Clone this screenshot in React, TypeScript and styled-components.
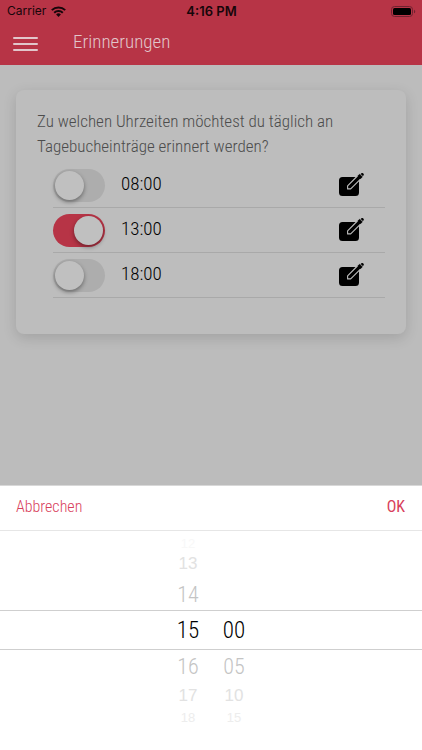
import React, { useState } from "react";
import styled, { createGlobalStyle, css } from "styled-components";

const narrow = `"Roboto Condensed", "Liberation Sans Narrow", "Liberation Sans", Arial, sans-serif`;

const GlobalStyle = createGlobalStyle`
  *, *::before, *::after { box-sizing: border-box; }
  html, body, #root { height: 100%; }
  body { margin: 0; background: #bcbcbc; font-family: ${narrow}; font-weight: 300; }
  button { border: 0; padding: 0; background: none; font: inherit; color: inherit; cursor: pointer; }
`;

const Screen = styled.div`
  min-height: 100%;
  display: flex;
  flex-direction: column;
  background: #bcbcbc;
`;

const Header = styled.header`
  background: #b73446;
  color: #e2c6cb;
`;

const StatusBar = styled.div`
  display: grid;
  grid-template-columns: 1fr auto 1fr;
  align-items: center;
  height: 22px;
  padding: 0 6px 0 7px;
  color: #16060a;
  font: 12px/16px Inter, "Liberation Sans", sans-serif;
`;

const Carrier = styled.span`
  display: flex;
  align-items: center;
  gap: 5px;
`;

const Clock = styled.time`
  font-size: 13px;
  font-weight: 600;
`;

const Battery = styled.svg`
  justify-self: end;
`;

const NavBar = styled.div`
  display: flex;
  align-items: center;
  gap: 35px;
  height: 43px;
  padding: 0 13px 3px;
`;

const MenuButton = styled.button`
  display: flex;
  padding-top: 4px;
`;

const Title = styled.h1`
  margin: 0;
  font-size: 19px;
  line-height: 24px;
  font-weight: 300;
`;

const Main = styled.main`
  flex: 1;
  padding: 25px 16px;
`;

const Card = styled.section`
  padding: 19px 21px 36px;
  border-radius: 8px;
  background: #bdbdbd;
  box-shadow: 0 4px 14px rgba(0, 0, 0, 0.14);
`;

const Question = styled.h2`
  margin: 0;
  font-size: 17px;
  line-height: 25px;
  font-weight: 300;
  color: #4c4c4c;
`;

const List = styled.ul`
  margin: 4px 0 0;
  padding: 0 0 0 16px;
  list-style: none;
`;

const Row = styled.li`
  display: flex;
  align-items: center;
  height: 45px;
  border-bottom: 1px solid #a9a9a9;
  padding-right: 21px;
`;

const Toggle = styled.input`
  appearance: none;
  flex: none;
  display: flex;
  width: 52px;
  height: 33px;
  margin: 0;
  padding: 2px;
  border-radius: 17px;
  background: #adadad;
  cursor: pointer;

  &::before {
    content: "";
    width: 29px;
    height: 29px;
    border-radius: 50%;
    background: #c0c0c0;
    box-shadow: 0 2px 4px rgba(0, 0, 0, 0.4);
  }

  &:checked {
    justify-content: flex-end;
    background: #b73446;
  }
`;

const TimeLabel = styled.label`
  flex: 1;
  padding: 0 0 2px 16px;
  font-size: 19px;
  line-height: 24px;
  color: #000;
`;

const EditButton = styled.button`
  display: flex;
  color: #000;
`;

const Sheet = styled.section`
  border-top: 1px solid #d8d8d8;
  background: #fff;
`;

const SheetBar = styled.div`
  display: flex;
  justify-content: space-between;
  align-items: center;
  height: 45px;
  padding: 0 17px 2px 16px;
  border-bottom: 1px solid #e6e6e6;
`;

const SheetButton = styled.button<{ $strong?: boolean }>`
  font-size: 16px;
  line-height: 24px;
  font-weight: ${(p) => (p.$strong ? 400 : 300)};
  color: #d8405b;
`;

const Wheel = styled.div`
  padding: 5px 0 26px;
`;

const tiers = [
  css`height: 40px; color: #000; font-size: 23px;`,
  css`height: 32px; color: #c4c4c4; font-size: 22px;`,
  css`height: 28px; color: #e2e2e2; font: 17px "Liberation Sans", Arial, sans-serif;`,
  css`height: 14px; color: #ededed; font: 13px "Liberation Sans", Arial, sans-serif;`,
];

const WheelRow = styled.div<{ $distance: number }>`
  display: grid;
  grid-template-columns: 24px 24px;
  justify-content: center;
  align-items: center;
  column-gap: 22px;
  text-align: center;
  ${(p) => tiers[p.$distance]}
  ${(p) => p.$distance === 0 && css`
    border-top: 1px solid #cfcfcf;
    border-bottom: 1px solid #cfcfcf;
  `}
`;

const WheelValue = styled.span<{ $faint?: boolean }>`
  ${(p) => p.$faint && css`color: #f8f8f8;`}
`;

const WifiIcon = () => (
  <svg width="15" height="11" viewBox="0 0 15 11" fill="none" stroke="currentColor" strokeWidth="2" aria-hidden="true">
    <path d="M.8 4.1a9.6 9.6 0 0 1 13.4 0" />
    <path d="M3.2 6.8a6.2 6.2 0 0 1 8.6 0" />
    <path d="M7.5 10.9 5.1 8.5a3.5 3.5 0 0 1 4.8 0Z" fill="currentColor" stroke="none" />
  </svg>
);

const BatteryIcon = () => (
  <Battery width="25" height="11" viewBox="0 0 25 11" aria-label="Akku voll" role="img">
    <rect x=".5" y=".5" width="21" height="10" rx="3" fill="none" stroke="#6f2230" />
    <rect x="2" y="2" width="18" height="7" rx="1.5" fill="#000" />
    <path d="M23 3.7c1.7.4 1.7 3.2 0 3.6Z" fill="#6f2230" />
  </Battery>
);

const MenuIcon = () => (
  <svg width="25" height="16" viewBox="0 0 25 16" stroke="currentColor" strokeWidth="2" strokeLinecap="round" aria-hidden="true">
    <path d="M1 2h23M1 8h23M1 14h23" />
  </svg>
);

const EditIcon = () => (
  <svg width="25" height="24" viewBox="0 0 25 24" aria-hidden="true">
    <path d="M3.5 4h13L20 7v12.500a3.500 3.500 0 0 1-3.500 3.500h-13A3.500 3.500 0 0 1 0 19.500V7.500A3.500 3.500 0 0 1 3.500 4Z" fill="currentColor" />
    <path d="M8.600 15.900V12.800L19.400 2 22.500 5.100 11.700 15.900Z" fill="currentColor" stroke="#bdbdbd" strokeWidth="1.100" strokeLinejoin="round" />
    <path d="m18.500 3 2.300-2.300 3 3-2.300 2.300Z" fill="currentColor" />
    <path d="m21.700.9.400-.4a1.500 1.500 0 0 1 2.200 2.200l-.5.400Z" fill="currentColor" />
    <path d="m20.900 1.100 2.700 2.700" stroke="#bdbdbd" strokeWidth=".5" />
  </svg>
);

const initialReminders = [
  { time: "08:00", active: false },
  { time: "13:00", active: true },
  { time: "18:00", active: false },
];

const wheelRows: [number, string, string][] = [
  [3, "12", ""],
  [2, "13", ""],
  [1, "14", ""],
  [0, "15", "00"],
  [1, "16", "05"],
  [2, "17", "10"],
  [3, "18", "15"],
];

export default function App() {
  const [reminders, setReminders] = useState(initialReminders);
  const toggle = (time: string) =>
    setReminders((all) => all.map((r) => (r.time === time ? { ...r, active: !r.active } : r)));

  return (
    <>
      <GlobalStyle />
      <Screen>
        <Header>
          <StatusBar>
            <Carrier>Carrier <WifiIcon /></Carrier>
            <Clock>4:16 PM</Clock>
            <BatteryIcon />
          </StatusBar>
          <NavBar>
            <MenuButton aria-label="Menü"><MenuIcon /></MenuButton>
            <Title>Erinnerungen</Title>
          </NavBar>
        </Header>
        <Main>
          <Card>
            <Question>Zu welchen Uhrzeiten möchtest du täglich an Tagebucheinträge erinnert werden?</Question>
            <List>
              {reminders.map(({ time, active }) => (
                <Row key={time}>
                  <Toggle type="checkbox" role="switch" id={`t-${time}`} checked={active} onChange={() => toggle(time)} />
                  <TimeLabel htmlFor={`t-${time}`}>{time}</TimeLabel>
                  <EditButton aria-label={`${time} bearbeiten`}><EditIcon /></EditButton>
                </Row>
              ))}
            </List>
          </Card>
        </Main>
        <Sheet>
          <SheetBar>
            <SheetButton>Abbrechen</SheetButton>
            <SheetButton $strong>OK</SheetButton>
          </SheetBar>
          <Wheel>
            {wheelRows.map(([distance, hour, minute]) => (
              <WheelRow key={hour} $distance={distance}>
                <WheelValue $faint={hour === "12"}>{hour}</WheelValue>
                <WheelValue>{minute}</WheelValue>
              </WheelRow>
            ))}
          </Wheel>
        </Sheet>
      </Screen>
    </>
  );
}
